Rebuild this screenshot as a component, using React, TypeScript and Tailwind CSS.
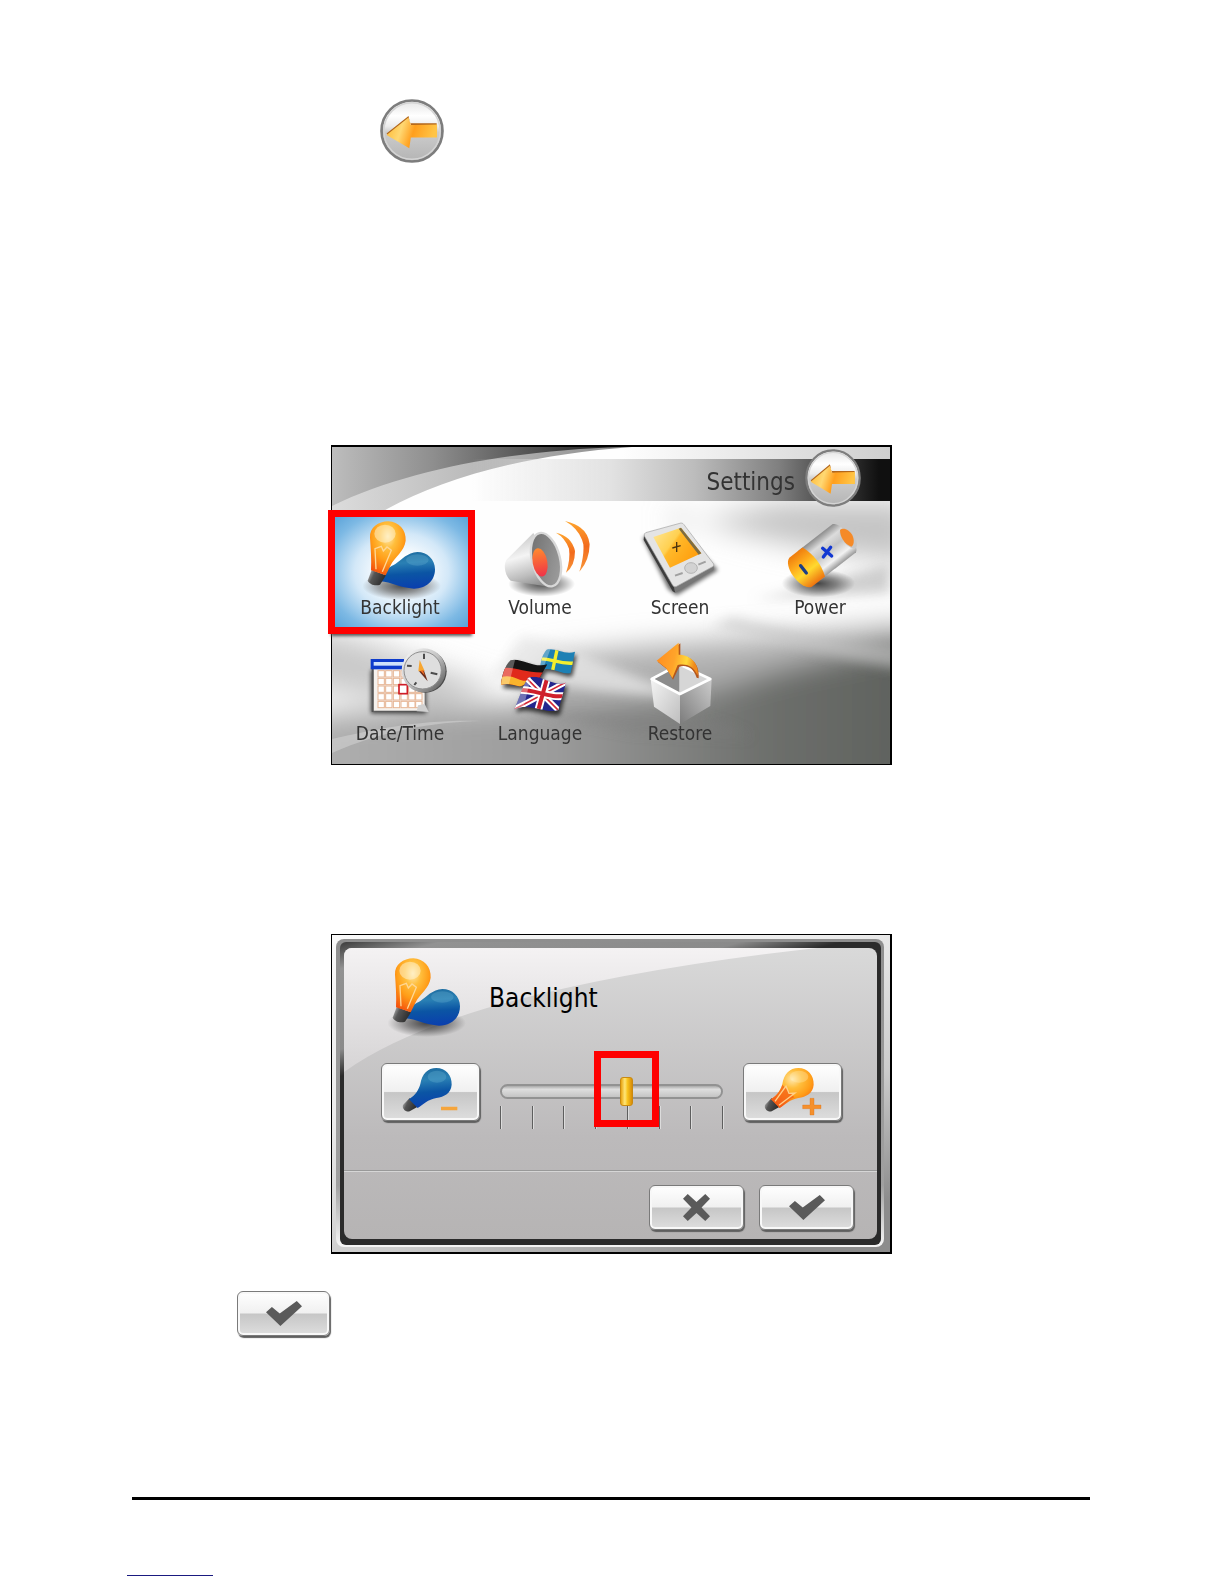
import { useState } from "react";
import type { ReactNode } from "react";
import clsx from "clsx";

function BackIcon({ className }: { className?: string }) {
  return (
    <svg viewBox="0 0 166 174" preserveAspectRatio="none" className={className} aria-hidden="true">
      <defs>
        <linearGradient id="backDisc" x1="0" y1="0" x2="0" y2="1">
          <stop offset="0" stopColor="#e4e4e4" />
          <stop offset=".25" stopColor="#ffffff" />
          <stop offset=".42" stopColor="#ececec" />
          <stop offset=".52" stopColor="#cccccc" />
          <stop offset="1" stopColor="#b4b4b4" />
        </linearGradient>
        <linearGradient id="backArrow" x1="0" y1="0" x2="1" y2=".2">
          <stop offset="0" stopColor="#ffb62c" />
          <stop offset=".35" stopColor="#ffd873" />
          <stop offset=".6" stopColor="#ff9f1e" />
          <stop offset="1" stopColor="#ffc445" />
        </linearGradient>
      </defs>
      <ellipse cx="83" cy="87" rx="79" ry="83" fill="url(#backDisc)" stroke="#7d7d7d" strokeWidth="7" />
      <ellipse cx="83" cy="87" rx="73" ry="77" fill="none" stroke="#d4d4d4" strokeWidth="4" />
      <path d="M17 94L74 46L78 66H147V74H82L75 56L22 100Z" fill="#b3661a" />
      <path d="M17 98L74 50L80 71L148 69V105H80L76 134Z" fill="url(#backArrow)" />
    </svg>
  );
}

function BulbDefs() {
  return (
    <defs>
      <radialGradient id="bulbOrange" cx=".5" cy=".28" r=".75">
        <stop offset="0" stopColor="#ffe9b0" />
        <stop offset=".3" stopColor="#ffbe3c" />
        <stop offset=".6" stopColor="#ff9d18" />
        <stop offset="1" stopColor="#f4500c" />
      </radialGradient>
      <linearGradient id="bulbBlue" x1=".4" y1="0" x2=".5" y2="1">
        <stop offset="0" stopColor="#1d6ca0" />
        <stop offset=".3" stopColor="#2a80b4" />
        <stop offset=".6" stopColor="#0b55a4" />
        <stop offset="1" stopColor="#0a3fae" />
      </linearGradient>
      <linearGradient id="bulbSocket" x1="0" y1="0" x2="1" y2=".4">
        <stop offset="0" stopColor="#d2d2d2" />
        <stop offset=".4" stopColor="#555" />
        <stop offset="1" stopColor="#2c2c2c" />
      </linearGradient>
      <radialGradient id="softShadow">
        <stop offset="0" stopColor="#000" stopOpacity=".7" />
        <stop offset=".5" stopColor="#000" stopOpacity=".4" />
        <stop offset="1" stopColor="#000" stopOpacity="0" />
      </radialGradient>
    </defs>
  );
}

function BulbsIcon() {
  return (
    <svg viewBox="96 252 288 222" className="h-[74px] w-24 shrink-0 overflow-visible" aria-hidden="true">
      <BulbDefs />
      <ellipse cx="245" cy="450" rx="118" ry="42" fill="url(#softShadow)" />
      <path d="M345 400C345 370 322 348 292 348C262 349 245 372 226 384C212 392 200 395 196 412L180 436C215 438 240 456 282 458C318 458 345 435 345 400Z" fill="url(#bulbBlue)" />
      <ellipse cx="292" cy="372" rx="34" ry="17" fill="#7cc0dc" opacity=".25" />
      <path d="M155 402L198 418L180 446C165 452 148 444 143 434Z" fill="url(#bulbSocket)" />
      <path d="M150 305C148 275 175 256 205 256C236 257 259 282 257 314C253 347 224 362 212 388L197 418L153 403C155 370 152 335 150 305Z" fill="url(#bulbOrange)" />
      <ellipse cx="195" cy="293" rx="32" ry="27" fill="#fff6d8" opacity=".5" />
      <path d="M168 400L165 338L184 331L190 345L201 333L214 343L187 407" fill="none" stroke="#ffd795" strokeWidth="4" />
    </svg>
  );
}

function BulbStepIcon({ sign }: { sign: "minus" | "plus" }) {
  const isPlus = sign === "plus";
  return (
    <svg viewBox="246 426 180 156" className="h-[52px] w-[60px] overflow-visible" aria-hidden="true">
      <path d="M272 522L296 548L272 562C262 566 248 555 252 543Z" fill="url(#bulbSocket)" />
      <path
        d="M352 432C380 432 399 453 398 482C396 508 376 518 352 522C327 526 312 542 296 552L270 526C290 512 298 500 304 480C309 450 326 432 352 432Z"
        fill={isPlus ? "url(#bulbOrange)" : "url(#bulbBlue)"}
      />
      <ellipse cx="354" cy="458" rx="28" ry="18" fill={isPlus ? "#fff2c4" : "#6fb8d8"} opacity=".3" />
      {isPlus && <path d="M270 526C290 512 298 500 304 482L340 520C320 528 310 542 296 552Z" fill="#f4601a" opacity=".75" />}
      {isPlus && <path d="M282 532L315 486L324 508L342 507L294 544" fill="none" stroke="#ffd08a" strokeWidth="4" />}
      {isPlus ? (
        <path d="M387 523H399V543H420V554H399V573H387V554H365V543H387Z" fill="#f5902c" stroke="#d9701a" />
      ) : (
        <path d="M366 548H415V559H366Z" fill="#f5a53c" />
      )}
    </svg>
  );
}

function VolumeIcon() {
  return (
    <svg viewBox="516 252 288 222" className="h-[74px] w-24 overflow-visible" aria-hidden="true">
      <defs>
        <linearGradient id="coneBody" x1=".3" y1="0" x2=".6" y2="1">
          <stop offset="0" stopColor="#c4c4c4" />
          <stop offset=".4" stopColor="#f4f4f4" />
          <stop offset=".75" stopColor="#bdbdbd" />
          <stop offset="1" stopColor="#8b8b8b" />
        </linearGradient>
        <linearGradient id="coneInner" x1="0" y1="0" x2="1" y2="1">
          <stop offset="0" stopColor="#6c6c6c" />
          <stop offset="1" stopColor="#a4a4a4" />
        </linearGradient>
        <linearGradient id="coneRed" x1="0" y1="0" x2="0" y2="1">
          <stop offset="0" stopColor="#ff8a2e" />
          <stop offset="1" stopColor="#ef3348" />
        </linearGradient>
        <linearGradient id="waves" x1="0" y1="0" x2="0" y2="1">
          <stop offset="0" stopColor="#ffa62e" />
          <stop offset=".5" stopColor="#f26a1c" />
          <stop offset="1" stopColor="#f8973a" />
        </linearGradient>
      </defs>
      <ellipse cx="665" cy="444" rx="100" ry="38" fill="url(#softShadow)" />
      <path d="M640 291L559 372C548 390 558 424 572 434L695 454L715 410Z" fill="url(#coneBody)" />
      <ellipse cx="678" cy="371" rx="42" ry="82" transform="rotate(-14 678 371)" fill="url(#coneInner)" stroke="#d8d8d8" strokeWidth="7" />
      <ellipse cx="660" cy="379" rx="22" ry="43" transform="rotate(-10 660 379)" fill="url(#coneRed)" />
      <path d="M708 290Q755 300 765 345Q765 390 738 410Q752 370 747 338Q735 305 708 290Z" fill="url(#waves)" />
      <path d="M735 255Q803 270 809 325Q808 375 778 407Q793 360 790 325Q780 280 735 255Z" fill="url(#waves)" />
    </svg>
  );
}

function ScreenIcon() {
  return (
    <svg viewBox="96 252 288 222" className="h-[74px] w-24 overflow-visible" aria-hidden="true">
      <defs>
        <linearGradient id="pdaGlass" x1="0" y1="0" x2="1" y2=".6">
          <stop offset="0" stopColor="#ffe89a" />
          <stop offset=".45" stopColor="#ffd050" />
          <stop offset=".5" stopColor="#ffb92a" />
          <stop offset="1" stopColor="#ff9d0c" />
        </linearGradient>
        <filter id="blurSmall" x="-30%" y="-30%" width="160%" height="160%">
          <feGaussianBlur stdDeviation="7" />
        </filter>
      </defs>
      <path d="M128 305L230 275L354 402L230 478L205 460Z" fill="#000" opacity=".6" filter="url(#blurSmall)" />
      <path d="M132 296L222 454L226 470L218 466L131 312Z" fill="#3c3c3c" />
      <path d="M222 452L341 388V402L226 471Z" fill="#777" />
      <path d="M137 290L243 261Q249 261 252 266L341 384Q343 390 338 392L228 452Q222 454 218 448L133 300Q131 293 137 290Z" fill="#e4e4e4" stroke="#a2a2a2" strokeWidth="2" />
      <path d="M160 303L243 275L304 352L210 395Z" fill="url(#pdaGlass)" />
      <path d="M243 275L304 352L296 356L236 278Z" fill="#7d6c42" />
      <path d="M230 318V348M217 336L242 329" stroke="#4b3410" strokeWidth="4" />
      <ellipse cx="273" cy="396" rx="19" ry="16" fill="#d2d2d2" stroke="#b4b4b4" strokeWidth="3" />
      <path d="M225 419L248 411M295 386L317 377" stroke="#a0a0a0" strokeWidth="6" />
    </svg>
  );
}

function PowerIcon() {
  return (
    <svg viewBox="516 252 288 222" className="h-[74px] w-24 overflow-visible" aria-hidden="true">
      <defs>
        <linearGradient id="cellSilver" x1="0" y1="0" x2="0" y2="1">
          <stop offset="0" stopColor="#8c8c8c" />
          <stop offset=".25" stopColor="#dcdcdc" />
          <stop offset=".5" stopColor="#c4c4c4" />
          <stop offset=".8" stopColor="#f2f2f2" />
          <stop offset="1" stopColor="#999" />
        </linearGradient>
        <linearGradient id="cellOrange" x1="0" y1="0" x2="0" y2="1">
          <stop offset="0" stopColor="#ef7d0e" />
          <stop offset=".35" stopColor="#ffb01e" />
          <stop offset=".6" stopColor="#ffd92e" />
          <stop offset="1" stopColor="#ee7410" />
        </linearGradient>
      </defs>
      <ellipse cx="655" cy="442" rx="110" ry="42" fill="url(#softShadow)" />
      <g transform="translate(668 357) rotate(-38)">
        <path d="M-50 -55H80C104 -46 108 42 84 55H-50Z" fill="url(#cellSilver)" />
        <path d="M-34 -55H-84C-116 -46 -118 46 -84 55H-34C-20 20 -20 -20 -34 -55Z" fill="url(#cellOrange)" />
      </g>
      <ellipse cx="745" cy="307" rx="17" ry="36" transform="rotate(-38 745 307)" fill="#c8c8c8" />
      <path d="M720 282C730 272 748 282 757 297C764 312 762 328 754 332C735 325 720 305 720 282Z" fill="#f58a28" />
      <path d="M668 337L695 360M692 334L670 363" stroke="#1238d2" strokeWidth="10" strokeLinecap="round" />
      <path d="M602 389L619 411" stroke="#1c3f86" strokeWidth="10" strokeLinecap="round" />
    </svg>
  );
}

function DateTimeIcon() {
  const cols = [174, 197, 220, 243, 266, 287];
  const rows = [122, 145, 168, 191, 214];
  return (
    <svg viewBox="96 48 288 222" className="h-[74px] w-24 overflow-visible" aria-hidden="true">
      <defs>
        <linearGradient id="clockRing" x1="0" y1="0" x2="1" y2="1">
          <stop offset="0" stopColor="#fff" />
          <stop offset=".5" stopColor="#c2c2c2" />
          <stop offset="1" stopColor="#4c4c4c" />
        </linearGradient>
      </defs>
      <path d="M153 120H318V250H153Z" fill="#000" opacity=".7" filter="url(#blurSmall)" />
      <path d="M160 114H314V224L296 242H160Z" fill="#f6f2ee" />
      <path d="M155 117H161V246H155Z" fill="#555" />
      {rows.map((y) =>
        cols.map((x) => (
          <rect key={`${x}-${y}`} x={x} y={y} width="19" height="19" fill="#fff" stroke="#e6b494" strokeWidth="3" />
        ))
      )}
      <path d="M314 222L294 226L290 244L326 246Z" fill="#d0d0d0" />
      <rect x="152" y="87" width="100" height="31" fill="#0e3ccc" />
      <rect x="161" y="96" width="90" height="11" fill="#cfe2fb" />
      <rect x="237" y="164" width="25" height="27" fill="#fff" stroke="#cf1c26" strokeWidth="5" />
      <circle cx="316" cy="124" r="64" fill="#4a4a4a" />
      <circle cx="311" cy="121" r="66" fill="url(#clockRing)" />
      <circle cx="308" cy="121" r="56" fill="#dedede" stroke="#8f8f8f" strokeWidth="3" />
      <path d="M312 71V87M261 107L275 108M332 128L352 133M283 165L289 157" stroke="#4c4c4c" strokeWidth="6" />
      <path d="M299 90L314 123L295 124Z" fill="#f7a630" />
      <path d="M297 124L312 122L323 154Z" fill="#6c2a18" />
      <path d="M301 122L309 120L314 136Z" fill="#f26f24" />
    </svg>
  );
}

function LanguageIcon() {
  return (
    <svg viewBox="516 48 288 222" className="h-[74px] w-24 overflow-visible" aria-hidden="true">
      <defs>
        <clipPath id="flagSe">
          <path d="M680 59C705 52 735 76 765 65L752 129C728 138 700 108 661 120C660 96 668 72 680 59Z" />
        </clipPath>
        <clipPath id="flagDe">
          <path d="M572 91C600 80 640 116 682 103L650 158C625 150 606 172 597 169C578 164 560 158 543 165C546 135 554 108 572 91Z" />
        </clipPath>
        <clipPath id="flagUk">
          <path d="M624 144C658 128 700 174 738 158L715 240C680 254 630 216 583 238C600 200 606 172 624 144Z" />
        </clipPath>
      </defs>
      <g fill="#000" opacity=".7" filter="url(#blurSmall)" transform="translate(5 9)">
        <path d="M680 59C705 52 735 76 765 65L752 129C728 138 700 108 661 120Z" />
        <path d="M572 91C600 80 640 116 682 103L650 158L597 169L543 165Z" />
        <path d="M624 144C658 128 700 174 738 158L715 245C680 254 630 221 583 238Z" />
      </g>
      <g clipPath="url(#flagSe)">
        <path d="M650 45H775V145H650Z" fill="#1d80b4" />
        <path d="M650 88C690 80 720 108 770 98" fill="none" stroke="#f4ee2e" strokeWidth="10" />
        <path d="M712 55L696 130" stroke="#f4ee2e" strokeWidth="10" />
        <path d="M650 45H696L664 130H650Z" fill="#fff" opacity=".3" />
      </g>
      <g clipPath="url(#flagDe)">
        <path d="M530 70H700V190H530Z" fill="#141414" />
        <path d="M530 122C570 95 620 140 700 124V190H530Z" fill="#e02a1c" />
        <path d="M530 146C570 128 590 148 610 152C630 154 650 148 690 156V190H530Z" fill="#f9b42c" />
        <path d="M530 70H590L560 190H530Z" fill="#fff" opacity=".3" />
      </g>
      <g clipPath="url(#flagUk)">
        <path d="M570 120H750V260H570Z" fill="#23268e" />
        <path d="M610 135L724 250M750 150L570 245" stroke="#fff" strokeWidth="17" />
        <path d="M610 135L724 250M750 150L570 245" stroke="#d42836" strokeWidth="5" />
        <path d="M590 182C630 170 690 210 740 196M684 135L652 250" fill="none" stroke="#fff" strokeWidth="23" />
        <path d="M590 182C630 170 690 210 740 196M684 135L652 250" fill="none" stroke="#cf1f2c" strokeWidth="12" />
        <path d="M560 120H638L604 260H560Z" fill="#fff" opacity=".35" />
      </g>
    </svg>
  );
}

function RestoreIcon() {
  return (
    <svg viewBox="96 48 288 222" className="h-[74px] w-24 overflow-visible" aria-hidden="true">
      <defs>
        <linearGradient id="boxLeft" x1="0" y1="0" x2="1" y2="1">
          <stop offset="0" stopColor="#f4f4f4" />
          <stop offset="1" stopColor="#bebebe" />
        </linearGradient>
        <linearGradient id="boxRight" x1="0" y1="1" x2="1" y2="0">
          <stop offset="0" stopColor="#7c7c7c" />
          <stop offset="1" stopColor="#cccccc" />
        </linearGradient>
        <linearGradient id="restoreArrow" x1="0" y1="0" x2="1" y2=".2">
          <stop offset="0" stopColor="#ff8a1e" />
          <stop offset=".5" stopColor="#ffa42a" />
          <stop offset=".8" stopColor="#ffd83a" />
          <stop offset="1" stopColor="#f08a1c" />
        </linearGradient>
      </defs>
      <path d="M152 147L240 193V282L162 230Z" fill="url(#boxLeft)" />
      <path d="M335 147L240 193V282L331 228Z" fill="url(#boxRight)" />
      <path d="M157 147L238 105V190Z" fill="#8c8c8c" />
      <path d="M331 146L238 105V190Z" fill="#d6d6d6" />
      <path d="M155 147L238 103L331 147L240 192Z" fill="none" stroke="#fff" strokeWidth="8" strokeLinejoin="round" />
      <path d="M174 96L241 40V77C279 79 300 108 296 145L290 143C280 114 262 104 238 110L219 149L201 118Z" fill="#b4561c" />
      <path d="M170 92L236 38V74C274 74 298 104 293 136C280 108 260 100 233 105L217 144L198 114Z" fill="url(#restoreArrow)" />
    </svg>
  );
}

function SettingsBackdrop() {
  return (
    <svg viewBox="0 0 558 317" preserveAspectRatio="none" className="absolute inset-0 h-full w-full" aria-hidden="true">
      <defs>
        <linearGradient id="arcDark" x1="0" y1="0" x2="1" y2="0">
          <stop offset="0" stopColor="#bdbdbd" />
          <stop offset=".35" stopColor="#8e8e8e" />
          <stop offset=".7" stopColor="#505050" />
          <stop offset="1" stopColor="#181818" />
        </linearGradient>
        <linearGradient id="arcLight" x1="0" y1="0" x2="1" y2="0">
          <stop offset="0" stopColor="#dcdcdc" />
          <stop offset=".5" stopColor="#b8b8b8" />
          <stop offset="1" stopColor="#8a8a8a" />
        </linearGradient>
        <linearGradient id="topStrip" x1="0" y1="0" x2="1" y2="0">
          <stop offset="0" stopColor="#fefefe" />
          <stop offset="1" stopColor="#cfcfcf" />
        </linearGradient>
        <linearGradient id="lowerShade" x1="0" y1="0" x2="1" y2="0">
          <stop offset="0" stopColor="#b0b0b0" />
          <stop offset=".4" stopColor="#9c9c9c" />
          <stop offset=".75" stopColor="#6d6f6c" />
          <stop offset="1" stopColor="#5d605c" />
        </linearGradient>
        <filter id="haze" x="-40%" y="-80%" width="180%" height="260%">
          <feGaussianBlur stdDeviation="14" />
        </filter>
        <filter id="hazeSmall" x="-40%" y="-80%" width="180%" height="260%">
          <feGaussianBlur stdDeviation="6" />
        </filter>
      </defs>
      <path d="M0 0H558V317H0Z" fill="#fefefe" />
      <path d="M290 0H558V12H290Z" fill="url(#topStrip)" />
      <g filter="url(#haze)">
        <path d="M200 212C330 192 420 195 580 175V340H200Z" fill="#b0b0b0" />
        <path d="M-30 270C120 250 300 270 420 230C480 212 530 205 590 190V350H-30Z" fill="url(#lowerShade)" />
        <path d="M340 80L450 55H580V115C500 108 420 92 340 65Z" fill="#c4c4c4" />
        <path d="M-30 180C40 190 90 220 170 240L100 260L-30 240Z" fill="#c9c9c9" />
      </g>
      <g filter="url(#hazeSmall)">
        <path d="M558 118C500 130 470 145 420 152L558 146Z" fill="#a4a4a4" opacity=".5" />
        <path d="M380 180C440 190 500 212 570 222V200C500 196 450 180 400 170Z" fill="#c4c4c4" opacity=".6" />
        <path d="M180 262C260 275 340 250 420 290L300 285Z" fill="#7d7d7d" opacity=".4" />
        <path d="M190 190C260 200 300 240 380 250C300 250 230 240 160 230Z" fill="#e6e6e6" opacity=".8" />
      </g>
      <path d="M0 292C45 282 90 272 150 274C100 275 50 284 0 306Z" fill="#d8d8d8" opacity=".5" />
      <path d="M0 0H300C190 8 110 32 55 62L0 95Z" fill="url(#arcLight)" />
      <path d="M0 0H290C190 3 80 20 0 59Z" fill="url(#arcDark)" />
    </svg>
  );
}

type Tile = { id: string; label: string; icon: ReactNode };

const tiles: Tile[] = [
  { id: "backlight", label: "Backlight", icon: <BulbsIcon /> },
  { id: "volume", label: "Volume", icon: <VolumeIcon /> },
  { id: "screen", label: "Screen", icon: <ScreenIcon /> },
  { id: "power", label: "Power", icon: <PowerIcon /> },
  { id: "datetime", label: "Date/Time", icon: <DateTimeIcon /> },
  { id: "language", label: "Language", icon: <LanguageIcon /> },
  { id: "restore", label: "Restore", icon: <RestoreIcon /> },
];

function SettingsScreen() {
  const [selected, setSelected] = useState("backlight");

  return (
    <section className="relative ml-[199px] mt-[282px] w-full max-w-[561px] border-t-2 border-r-2 border-b border-l border-black">
      <SettingsBackdrop />
      <div className="relative pt-3 pb-[2px]">
        <header className="flex h-[42px] items-center justify-end gap-[10px] bg-[linear-gradient(to_right,transparent_25%,#e2e2e2_50%,#bcbcbc_65%,#808080_80%,#101010_98%)] pb-1 pr-[29px]">
          <h1 className="pt-2 text-[24px] leading-8 text-[#333]">Settings</h1>
          <button type="button" aria-label="Back" className="shrink-0">
            <BackIcon className="h-[58px] w-14" />
          </button>
        </header>
        <div className="mt-[9px] -ml-[2px] grid grid-cols-4">
          {tiles.map((tile) => (
            <button
              key={tile.id}
              type="button"
              onClick={() => setSelected(tile.id)}
              className="relative flex h-[126px] flex-col items-center pt-[10px]"
            >
              {selected === tile.id && (
                <span className="absolute top-0 -left-[2px] h-[124px] w-[147px] border-[7px] border-[#fe0000] bg-[radial-gradient(ellipse_at_center,#ffffff_20%,#d3e8f8_50%,#7db9e4_80%,#5ba3d9_100%)] shadow-[0_5px_3px_-3px_#555]" />
              )}
              <span className="relative">{tile.icon}</span>
              <span className="relative text-[19px] leading-[26px] text-[#333]">{tile.label}</span>
            </button>
          ))}
        </div>
      </div>
    </section>
  );
}

type GlossButtonProps = { label: string; className?: string; children: ReactNode };

function GlossButton({ label, className, children }: GlossButtonProps) {
  return (
    <button
      type="button"
      aria-label={label}
      className={clsx(
        "flex shrink-0 items-center justify-center rounded-md border border-[#7a7a7a] bg-[linear-gradient(to_bottom,#ffffff_0%,#f0f0f0_49%,#c6c6c6_51%,#dedede_100%)] shadow-[inset_0_0_0_2px_#f8f8f8,1px_2px_1px_#5f5f5f]",
        className
      )}
    >
      {children}
    </button>
  );
}

function CheckIcon() {
  return (
    <svg viewBox="0 0 110 76" className="h-[25px] w-9" aria-hidden="true">
      <path d="M0 34L18 18L42 38L94 0L110 16L44 76Z" fill="#5a5a5a" />
    </svg>
  );
}

function CrossIcon() {
  return (
    <svg viewBox="0 0 80 80" className="h-[27px] w-[27px]" aria-hidden="true">
      <path d="M0 14L14 0L40 24L66 0L80 14L55 40L80 66L66 80L40 56L14 80L0 66L25 40Z" fill="#5a5a5a" />
    </svg>
  );
}

const ticks = [1, 2, 3, 4, 5, 6, 7, 8];

function BacklightDialog() {
  const [level, setLevel] = useState(5);

  return (
    <section className="ml-[199px] mt-[169px] w-full max-w-[561px] border-t border-r-2 border-b-2 border-l border-black bg-[linear-gradient(160deg,#fafafa_0%,#ececec_35%,#cccccc_65%,#8c8c8c_90%)] pt-1 pr-[6px] pb-[5px] pl-1">
      <div className="rounded-lg bg-[linear-gradient(to_bottom,#8e8e8e_0%,#a0a0a0_80%,#f4f4f4_99%)] pt-[3px] pr-[3px] pb-[2px] pl-1">
        <div className="rounded-md bg-[linear-gradient(165deg,#3c3c3c_0%,#929292_6%,#8a8a8a_24%,#2b2b2b_30%)] px-1 py-[6px]">
          <div className="relative overflow-hidden rounded-lg bg-[linear-gradient(to_bottom,#d9d9d9,#bcbabb_65%,#b6b4b4)] pt-[9px]">
            <svg viewBox="0 0 533 291" preserveAspectRatio="none" className="absolute inset-0 h-full w-full" aria-hidden="true">
              <defs>
                <linearGradient id="sheen" x1="0" y1="0" x2="0" y2="1">
                  <stop offset="0" stopColor="#f4f2f3" />
                  <stop offset="1" stopColor="#d6d4d5" />
                </linearGradient>
              </defs>
              <path d="M0 0H473Q276 22 143 60Q50 88 0 124Z" fill="url(#sheen)" />
            </svg>
            <div className="relative">
              <div className="flex items-center gap-4 pl-[33px]">
                <BulbsIcon />
                <h2 className="pt-2 text-[26px] leading-8 text-black">Backlight</h2>
              </div>
              <div className="mt-8 flex items-start gap-5 pr-[35px] pl-[37px]">
                <GlossButton label="Dimmer" className="h-[58px] w-[99px]">
                  <BulbStepIcon sign="minus" />
                </GlossButton>
                <div className="relative flex-1 pt-[14px]">
                  <input
                    type="range"
                    aria-label="Backlight level"
                    min={1}
                    max={8}
                    value={level}
                    onChange={(e) => setLevel(Number(e.target.value))}
                    className="block h-[29px] w-full appearance-none bg-transparent [&::-webkit-slider-runnable-track]:h-[15px] [&::-webkit-slider-runnable-track]:rounded-full [&::-webkit-slider-runnable-track]:border-2 [&::-webkit-slider-runnable-track]:border-[#929292] [&::-webkit-slider-runnable-track]:bg-[linear-gradient(to_bottom,#a8a8a8,#dedede_30%,#c4c4c4)] [&::-webkit-slider-thumb]:mt-[-9px] [&::-webkit-slider-thumb]:h-[29px] [&::-webkit-slider-thumb]:w-[13px] [&::-webkit-slider-thumb]:appearance-none [&::-webkit-slider-thumb]:rounded-[3px] [&::-webkit-slider-thumb]:border [&::-webkit-slider-thumb]:border-[#c98a10] [&::-webkit-slider-thumb]:bg-[linear-gradient(to_right,#e8a412,#ffe678_35%,#f8c21c_60%,#d88c08)]"
                  />
                  <div className="flex h-[23px] justify-between">
                    {ticks.map((tick) => (
                      <span key={tick} className="w-px bg-[#5e5e5e] shadow-[1px_0_0_#dcdcdc]" />
                    ))}
                  </div>
                  <span className="pointer-events-none absolute -top-3 left-[94px] h-[76px] w-[65px] border-[7px] border-[#fe0000]" />
                </div>
                <GlossButton label="Brighter" className="h-[58px] w-[99px]">
                  <BulbStepIcon sign="plus" />
                </GlossButton>
              </div>
              <footer className="mt-[41px] flex justify-end gap-[15px] border-t border-[#999] pt-[14px] pr-[23px] pb-[9px] shadow-[inset_0_1px_0_#d6d6d6]">
                <GlossButton label="Cancel" className="h-[45px] w-[95px]">
                  <CrossIcon />
                </GlossButton>
                <GlossButton label="Confirm" className="h-[45px] w-[95px]">
                  <CheckIcon />
                </GlossButton>
              </footer>
            </div>
          </div>
        </div>
      </div>
    </section>
  );
}

export default function App() {
  return (
    <main className="min-h-screen bg-white pt-[99px] pr-[134px] pb-2 pl-[132px] font-['DejaVu_Sans_Condensed','DejaVu_Sans',sans-serif]">
      <BackIcon className="ml-[248px] h-16 w-16" />
      <SettingsScreen />
      <BacklightDialog />
      <GlossButton label="Confirm" className="mt-[37px] ml-[105px] h-[45px] w-[93px]">
        <CheckIcon />
      </GlossButton>
      <hr className="mt-[161px] h-[3px] border-0 bg-black" />
      <hr className="-ml-[5px] mt-[75px] h-px w-[86px] border-0 bg-[#1a1a80]" />
    </main>
  );
}
